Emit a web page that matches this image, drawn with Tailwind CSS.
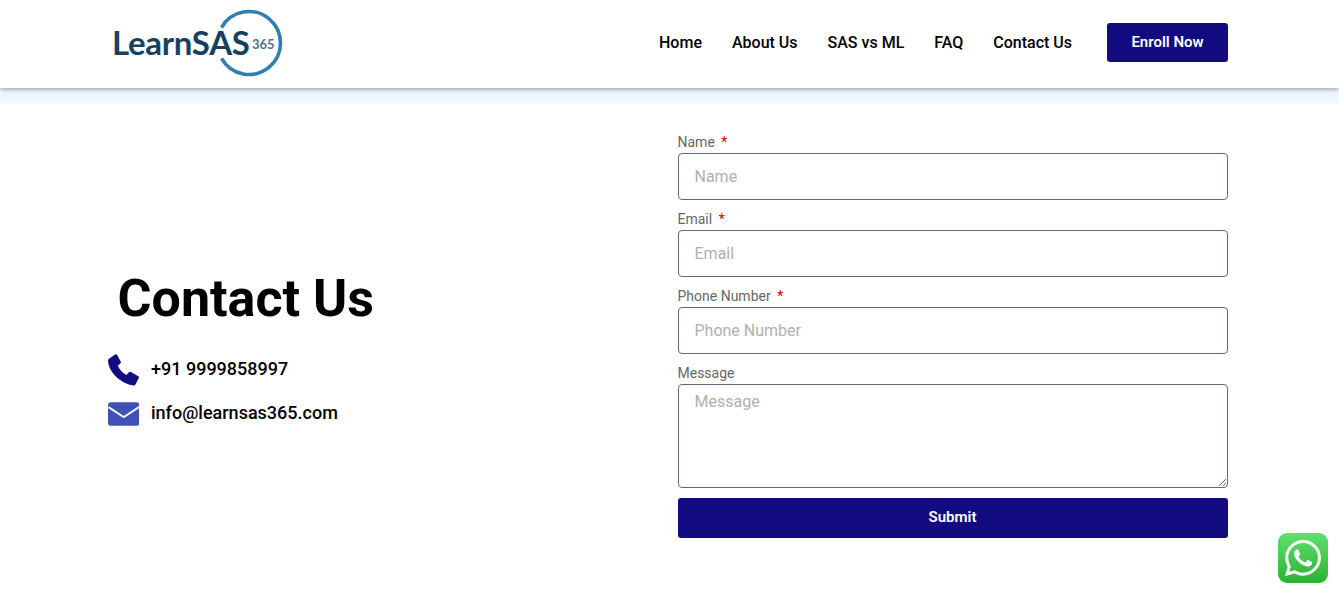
<!doctype html>
<html lang="en">
<head>
<meta charset="utf-8">
<title>Contact Us</title>
<script src="https://cdn.jsdelivr.net/npm/@tailwindcss/browser@4"></script>
</head>
<body class="relative h-[592px] overflow-hidden bg-white font-['Roboto',sans-serif]">
<header class="relative z-10 h-[88px] bg-white shadow-[0_1px_5px_rgba(0,0,0,0.4)]">
  <div class="ml-[108px] flex h-full w-[1120px] items-center justify-between pb-[3px]">
    <a href="#" class="relative ml-[4px] mt-[9px] block h-[70px] w-[170px] self-start">
      <svg class="absolute left-[103px] top-0 h-[68px] w-[68px]" viewBox="0 0 68 68" fill="none"><path d="M6.500 18.600 A 31.500 31.500 0 1 1 6.500 49.400" stroke="#2f7fb5" stroke-width="3.600"/></svg>
      <span class="absolute left-0 top-[14px] whitespace-nowrap font-['Lato',sans-serif] text-[33px] leading-[38px] font-bold tracking-[-0.3px] text-[#17415f]">LearnSAS</span>
      <span class="absolute left-[140px] top-[26px] font-['Lato',sans-serif] text-[13px] leading-[18px] font-bold text-[#4a7491]">365</span>
    </a>
    <nav class="flex items-center text-[16px] font-medium text-black">
      <a href="#" class="mr-[30px]">Home</a>
      <a href="#" class="mr-[30px]">About Us</a>
      <a href="#" class="mr-[30px]">SAS vs ML</a>
      <a href="#" class="mr-[30px]">FAQ</a>
      <a href="#" class="mr-[35px]">Contact Us</a>
      <a href="#" class="flex h-[39px] w-[121px] items-center justify-center rounded-[3px] bg-[#130b80] text-[15px] font-semibold text-white">Enroll Now</a>
    </nav>
  </div>
</header>
<div class="h-[15px] bg-[#f0f6fd]"></div>
<main class="ml-[107.5px] flex w-[1120px] justify-between pt-[31px]">
  <section class="flex h-[429px] w-[400px] flex-col justify-center">
    <h1 class="mb-[23px] ml-[10px] text-[52px] leading-[60px] font-bold text-black">Contact Us</h1>
    <div class="flex h-[32px] items-center gap-[12px]">
      <svg class="mt-[3px] h-[32px] w-[31.500px] shrink-0" viewBox="0 0 32 32"><path fill="#130b80" d="M1 4.500 7.200.3c.8-.5 1.600-.3 2.100.5l3.600 6.600c.4.8.2 1.500-.4 2L10 11.800c1.500 3.800 4.800 7.300 8.800 9.300l2.400-2.800c.6-.6 1.400-.7 2.100-.3l7.500 4.300c.7.400.9 1.200.5 1.900L27.700 31c-.5.700-1.100 1-2 .8C11.800 29.300.5 17.500 0 6.600 0 5.700.4 5 1 4.500Z"/></svg>
      <span class="text-[18px] font-medium text-black">+91 9999858997</span>
    </div>
    <div class="mt-[12px] flex h-[32px] items-center gap-[12px]">
      <svg class="mt-[3px] h-[32px] w-[31.500px] shrink-0" viewBox="0 0 32 32"><rect y="4" width="32" height="24" rx="3" fill="#3f51b5"/><path d="M0.500 9 15 18.500c.6.400 1.400.4 2 0L31.500 9" fill="none" stroke="#fff" stroke-width="2"/></svg>
      <span class="text-[18px] font-medium text-black">info@learnsas365.com</span>
    </div>
  </section>
  <form class="w-[550px] text-[14px] text-[#666]">
    <label class="block h-[19px] leading-[17px]">Name <span class="ml-[3px] text-[#e00000]">*</span></label>
    <input placeholder="Name" class="block h-[47px] w-full rounded-[4px] border border-[#5f6b7a] px-[16px] text-[16px] text-black placeholder:text-[#b0b0b0] outline-none">
    <label class="mt-[11px] block h-[19px] leading-[17px]">Email <span class="ml-[3px] text-[#e00000]">*</span></label>
    <input placeholder="Email" class="block h-[47px] w-full rounded-[4px] border border-[#5f6b7a] px-[16px] text-[16px] text-black placeholder:text-[#b0b0b0] outline-none">
    <label class="mt-[11px] block h-[19px] leading-[17px]">Phone Number <span class="ml-[3px] text-[#e00000]">*</span></label>
    <input placeholder="Phone Number" class="block h-[47px] w-full rounded-[4px] border border-[#5f6b7a] px-[16px] text-[16px] text-black placeholder:text-[#b0b0b0] outline-none">
    <label class="mt-[11px] block h-[19px] leading-[17px]">Message</label>
    <textarea placeholder="Message" class="block h-[104px] w-full rounded-[4px] border border-[#5f6b7a] px-[16px] py-[5px] text-[16px] text-black placeholder:text-[#b0b0b0] outline-none"></textarea>
    <button type="button" class="mt-[10px] block h-[40px] w-full rounded-[3px] bg-[#130b80] pb-[2px] text-[15px] font-semibold text-white">Submit</button>
  </form>
</main>
<a href="#" class="absolute left-[1278px] top-[533px] flex h-[50px] w-[50px] items-center justify-center rounded-[9px] bg-gradient-to-b from-[#5fe06f] to-[#28b32e]">
  <svg class="h-[36px] w-[36px]" viewBox="0 0 24 24" fill="#fff"><path d="M17.472 14.382c-.297-.149-1.758-.867-2.030-.967-.273-.099-.471-.148-.670.150-.197.297-.767.966-.940 1.164-.173.199-.347.223-.644.075-.297-.150-1.255-.463-2.390-1.475-.883-.788-1.480-1.761-1.653-2.059-.173-.297-.018-.458.130-.606.134-.133.298-.347.446-.520.149-.174.198-.298.298-.497.099-.198.050-.371-.025-.520-.075-.149-.669-1.612-.916-2.207-.242-.579-.487-.500-.669-.510-.173-.008-.371-.010-.570-.010-.198 0-.520.074-.792.372-.272.297-1.040 1.016-1.040 2.479 0 1.462 1.065 2.875 1.213 3.074.149.198 2.096 3.200 5.077 4.487.709.306 1.262.489 1.694.625.712.227 1.360.195 1.871.118.571-.085 1.758-.719 2.006-1.413.248-.694.248-1.289.173-1.413-.074-.124-.272-.198-.570-.347m-5.421 7.403h-.004a9.870 9.870 0 0 1-5.031-1.378l-.361-.214-3.741.982.998-3.648-.235-.374a9.860 9.860 0 0 1-1.510-5.260c.001-5.450 4.436-9.884 9.888-9.884 2.640 0 5.122 1.030 6.988 2.898a9.825 9.825 0 0 1 2.893 6.994c-.003 5.450-4.437 9.884-9.885 9.884m8.413-18.297A11.815 11.815 0 0 0 12.050 0C5.495 0 .160 5.335.157 11.892c0 2.096.547 4.142 1.588 5.945L.057 24l6.305-1.654a11.882 11.882 0 0 0 5.683 1.448h.005c6.554 0 11.890-5.335 11.893-11.893a11.821 11.821 0 0 0-3.480-8.413Z"/></svg>
</a>
</body>
</html>
